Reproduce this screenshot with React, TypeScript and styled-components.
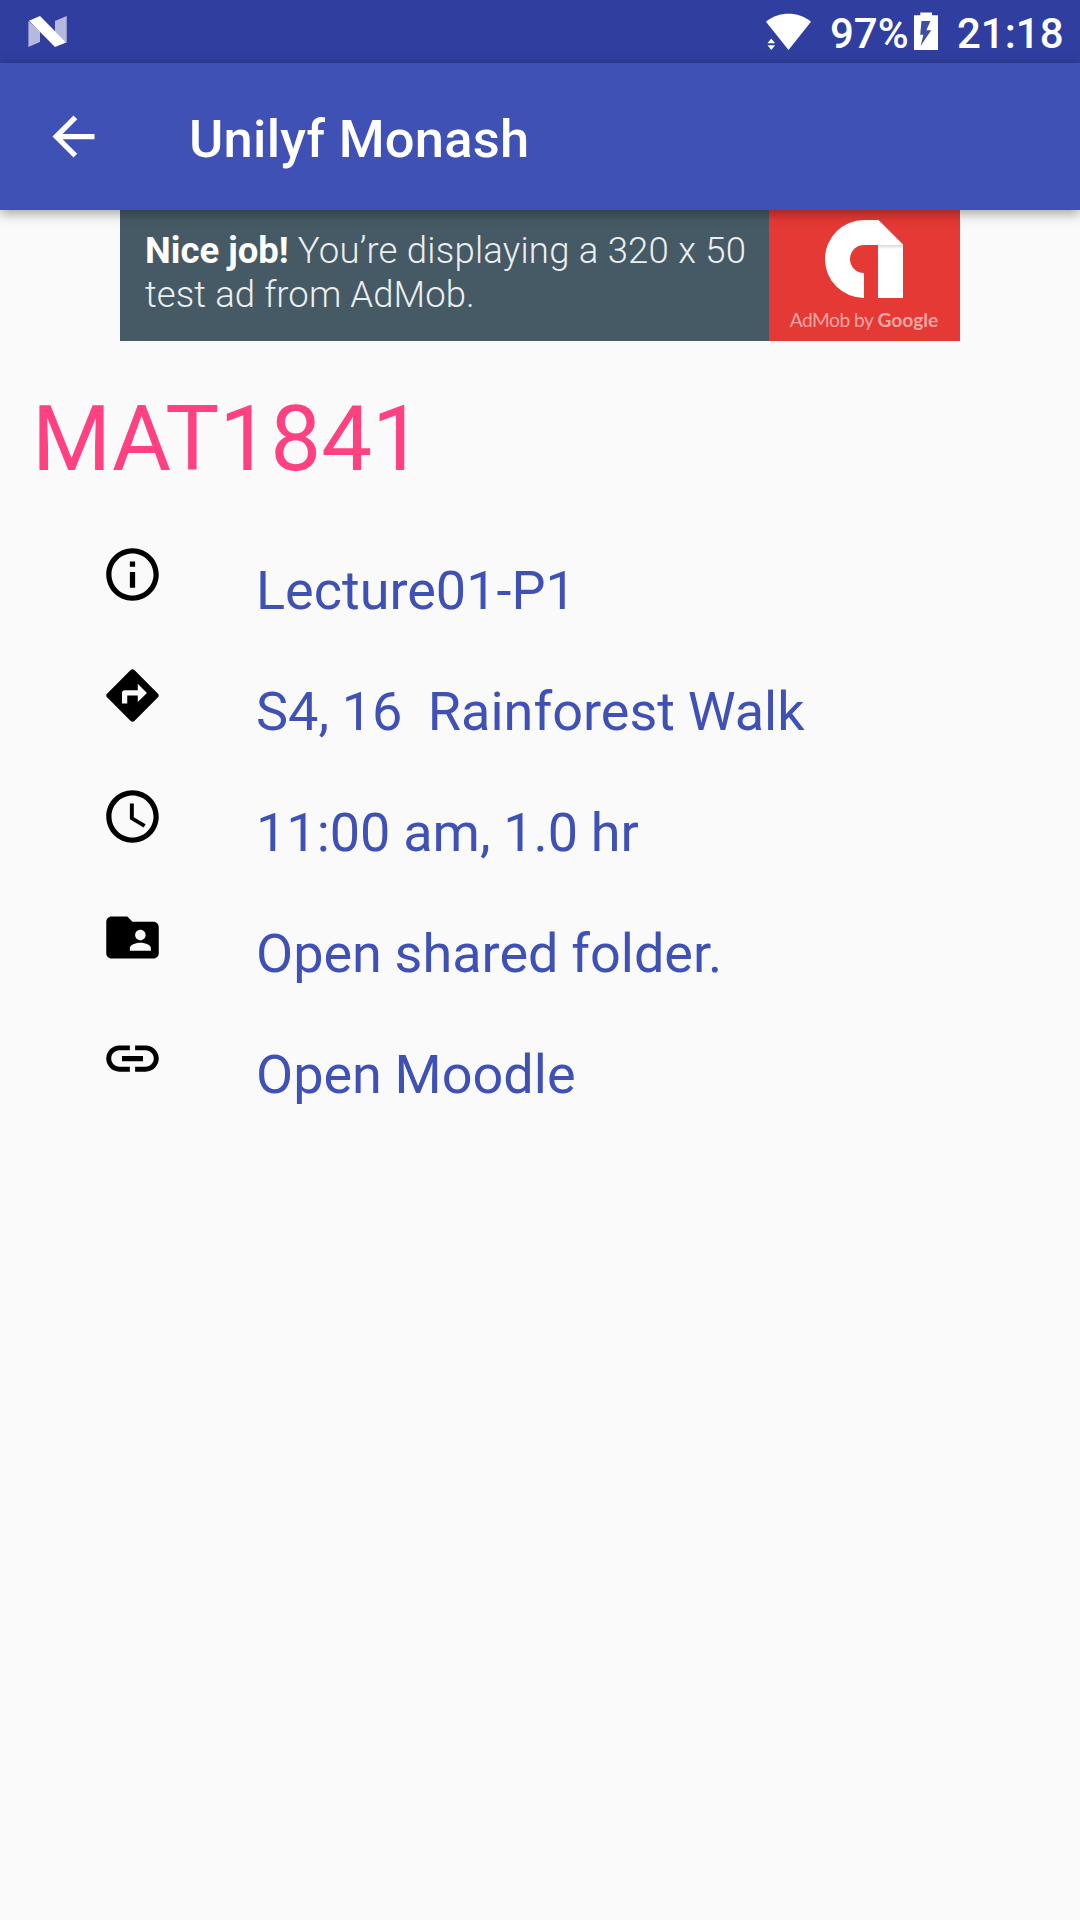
import React from 'react';
import styled, { createGlobalStyle } from 'styled-components';

const GlobalStyle = createGlobalStyle`
  html, body { margin: 0; padding: 0; background: #fafafa; }
  *, *::before, *::after { box-sizing: border-box; }
`;

const Screen = styled.div`
  width: 1080px;
  height: 1920px;
  display: flex;
  flex-direction: column;
  background: #fafafa;
  font-family: Roboto, 'Liberation Sans', sans-serif;
  overflow: hidden;
`;

const StatusBar = styled.div`
  height: 63px;
  flex: none;
  display: flex;
  align-items: flex-start;
  justify-content: space-between;
  padding: 0 16px 0 28px;
  background: #303f9f;
  color: #fff;
`;

const StatusGroup = styled.div`
  display: flex;
  align-items: flex-start;
`;

const StatusIcon = styled.svg<{ $w: number; $h: number; $top: number; $right?: number }>`
  display: block;
  flex: none;
  width: ${(p) => p.$w}px;
  height: ${(p) => p.$h}px;
  margin-top: ${(p) => p.$top}px;
  margin-right: ${(p) => p.$right ?? 0}px;
`;

const StatusText = styled.span<{ $width: number }>`
  width: ${(p) => p.$width}px;
  font-size: 42px;
  font-weight: 500;
  line-height: 68px;
  white-space: nowrap;
`;

const AppBar = styled.header`
  position: relative;
  z-index: 1;
  height: 147px;
  flex: none;
  display: flex;
  align-items: center;
  padding-left: 42px;
  background: #3f51b5;
  color: #fff;
  box-shadow: 0 3px 12px rgba(0, 0, 0, 0.38);
`;

const BackIcon = styled.svg`
  width: 63px;
  height: 63px;
  flex: none;
  fill: currentColor;
`;

const Title = styled.h1`
  margin: 0 0 0 84px;
  padding-top: 5px;
  font-size: 52.5px;
  font-weight: 500;
  line-height: 62px;
  letter-spacing: 0.24px;
  white-space: nowrap;
`;

const AdBanner = styled.div`
  width: 840px;
  height: 131px;
  flex: none;
  align-self: center;
  display: flex;
  background: #455a64;
`;

const AdCopy = styled.div`
  width: 649px;
  padding: 19px 0 0 25px;
  color: #eceff1;
  font-size: 36.5px;
  font-weight: 300;
  line-height: 44px;
  white-space: nowrap;
`;

const AdLine = styled.div<{ $spacing: number }>`
  letter-spacing: ${(p) => p.$spacing}px;
`;

const AdStrong = styled.b`
  font-weight: 700;
  color: #fff;
  letter-spacing: 0;
`;

const AdBrand = styled.div`
  flex: 1;
  display: flex;
  flex-direction: column;
  align-items: center;
  background: #e53935;
`;

const AdLogo = styled.svg`
  display: block;
  width: 78px;
  height: 78px;
  margin: 10px 1px 0 0;
`;

const AdCaption = styled.div`
  margin: 9px 1px 0 0;
  font-family: Lato, sans-serif;
  font-size: 19.2px;
  line-height: 26px;
  letter-spacing: -0.5px;
  color: #f5a5a3;
  white-space: nowrap;

  b {
    font-weight: 700;
    letter-spacing: 0;
  }
`;

const UnitCode = styled.h2`
  margin: 45px 0 0 32px;
  font-size: 90.6px;
  font-weight: 400;
  line-height: 106px;
  color: #ff4081;
  white-space: nowrap;
`;

const DetailList = styled.ul`
  margin: 51px 0 0;
  padding: 0 0 0 101px;
  list-style: none;
`;

const DetailRow = styled.li`
  display: flex;
  align-items: flex-start;
  height: 121px;
`;

const DetailIcon = styled.svg`
  width: 63px;
  height: 63px;
  flex: none;
`;

const DetailText = styled.span`
  margin: 16px 0 0 92px;
  font-size: 54px;
  line-height: 63px;
  word-spacing: -0.7px;
  color: #3f51b5;
  white-space: pre;
`;

const details = [
  {
    text: 'Lecture01-P1',
    path: 'M11 17h2v-6h-2v6zm1-15C6.48 2 2 6.48 2 12s4.48 10 10 10 10-4.48 10-10S17.52 2 12 2zm0 18c-4.41 0-8-3.59-8-8s3.59-8 8-8 8 3.59 8 8-3.59 8-8 8zM11 9h2V7h-2v2z',
  },
  {
    text: 'S4, 16  Rainforest Walk',
    path: 'M21.71 11.29l-9-9c-.39-.39-1.02-.39-1.41 0l-9 9c-.39.39-.39 1.02 0 1.41l9 9c.39.39 1.02.39 1.41 0l9-9c.39-.38.39-1.01 0-1.41zM14 14.5V12h-4v3H8v-4c0-.55.45-1 1-1h5V7.5l3.5 3.5-3.5 3.5z',
  },
  {
    text: '11:00 am, 1.0 hr',
    path: 'M11.99 2C6.47 2 2 6.48 2 12s4.47 10 9.99 10C17.52 22 22 17.52 22 12S17.52 2 11.99 2zM12 20c-4.42 0-8-3.58-8-8s3.58-8 8-8 8 3.58 8 8-3.58 8-8 8zm.5-13H11v6l5.25 3.15.75-1.23-4.5-2.67z',
  },
  {
    text: 'Open shared folder.',
    path: 'M20 6h-8l-2-2H4c-1.1 0-1.99.9-1.99 2L2 18c0 1.1.9 2 2 2h16c1.1 0 2-.9 2-2V8c0-1.1-.9-2-2-2zm-5 3c1.1 0 2 .9 2 2s-.9 2-2 2-2-.9-2-2 .9-2 2-2zm4 8h-8v-1c0-1.33 2.67-2 4-2s4 .67 4 2v1z',
  },
  {
    text: 'Open Moodle',
    path: 'M3.9 12c0-1.71 1.39-3.1 3.1-3.1h4V7H7c-2.76 0-5 2.24-5 5s2.24 5 5 5h4v-1.9H7c-1.71 0-3.1-1.39-3.1-3.1zM8 13h8v-2H8v2zm9-6h-4v1.9h4c1.71 0 3.1 1.39 3.1 3.1s-1.39 3.1-3.1 3.1h-4V17h4c2.76 0 5-2.24 5-5s-2.24-5-5-5z',
  },
];

export default function App() {
  return (
    <>
      <GlobalStyle />
      <Screen>
        <StatusBar>
          <StatusIcon $w={39} $h={32} $top={16} viewBox="0 0 39 32">
            <path d="M0.4 5 12 15.5V26L0.4 31zM27 5 38.7 0V27L27 15.5z" fill="#b5b9de" />
            <path d="M1 4.7 12 0 38.2 26.4 27 31z" fill="#fff" />
          </StatusIcon>
          <StatusGroup>
            <StatusIcon $w={46} $h={37} $top={13} $right={18} viewBox="0 0 46 37" fill="#fff">
              <path d="M0 8.7C13 -1.8 32 -1.8 45 8.7L22.5 37z" />
              <path d="M1.5 30.2 5.3 25.5 9.1 30.2zM1.5 32.2H9.1L5.3 37z" />
            </StatusIcon>
            <StatusText $width={84}>97%</StatusText>
            <StatusIcon $w={24} $h={38} $top={12} $right={19} viewBox="0 0 24 38">
              <path d="M6.3 .4H18V3.3H24V38H0V3.3H6.3z" fill="#fff" />
              <path d="M7.5 9H16.4L12.4 18.2H17.2L6.6 34 9.4 22.8H6.2z" fill="#3f4da6" />
            </StatusIcon>
            <StatusText $width={107}>21:18</StatusText>
          </StatusGroup>
        </StatusBar>

        <AppBar>
          <BackIcon viewBox="0 0 24 24">
            <path d="M20 11H7.83l5.59-5.59L12 4l-8 8 8 8 1.41-1.41L7.83 13H20v-2z" />
          </BackIcon>
          <Title>Unilyf Monash</Title>
        </AppBar>

        <AdBanner>
          <AdCopy>
            <AdLine $spacing={0.22}>
              <AdStrong>Nice job!</AdStrong> You’re displaying a 320 x 50
            </AdLine>
            <AdLine $spacing={0.08}>test ad from AdMob.</AdLine>
          </AdCopy>
          <AdBrand>
            <AdLogo viewBox="0 0 78 78">
              <defs>
                <linearGradient id="fold" x1="0" y1="0" x2="0" y2="1">
                  <stop offset="0" stopColor="#d8d8d8" />
                  <stop offset="1" stopColor="#fff" />
                </linearGradient>
              </defs>
              <path
                d="M39 0H53.5L78 24.5V78H53V25H39A14 14 0 0 0 39 53V78A39 39 0 0 1 39 0z"
                fill="#fff"
              />
              <path d="M53 25H78V29H53z" fill="url(#fold)" />
            </AdLogo>
            <AdCaption>
              AdMob by <b>Google</b>
            </AdCaption>
          </AdBrand>
        </AdBanner>

        <UnitCode>MAT1841</UnitCode>

        <DetailList>
          {details.map((d) => (
            <DetailRow key={d.text}>
              <DetailIcon viewBox="0 0 24 24">
                <path d={d.path} />
              </DetailIcon>
              <DetailText>{d.text}</DetailText>
            </DetailRow>
          ))}
        </DetailList>
      </Screen>
    </>
  );
}
